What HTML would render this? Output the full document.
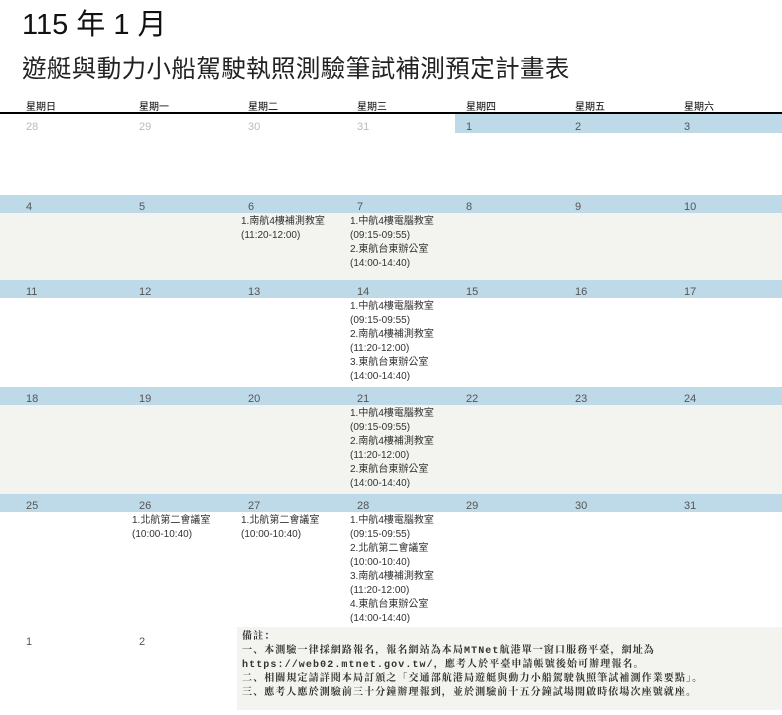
<!DOCTYPE html>
<html><head><meta charset="utf-8"><style>
body{margin:0;width:782px;height:715px;background:#fff;position:relative;overflow:hidden;font-family:"Liberation Sans","Noto Sans CJK TC",sans-serif;}
.a{position:absolute;}
.t1{left:22px;top:1px;font-size:29px;color:#111;white-space:nowrap}
.t2{left:22px;top:50px;font-size:24.5px;letter-spacing:0.4px;color:#222;white-space:nowrap}
.h{font-size:10px;color:#000;top:98px}
.line{left:0;top:112px;width:782px;height:2px;background:#000}
.blue{background:#bed9e7}
.grey{background:#f3f4ef}
.d{font-size:11px;color:#555}
.g{color:#bbb}
.ev{font-size:10px;color:#333;line-height:14px;white-space:nowrap}
.note{left:237px;top:627px;width:545px;height:83px;background:#f3f4ef;font-family:"Liberation Mono","Noto Serif CJK SC",serif;font-weight:bold;font-size:10px;letter-spacing:1.1px;color:#333;line-height:14px;padding:4px 0 0 5px;box-sizing:border-box;white-space:nowrap}
</style></head><body>
<div class="a t1">115 年 1 月</div>
<div class="a t2">遊艇與動力小船駕駛執照測驗筆試補測預定計畫表</div>
<div class="a h" style="left:26px">星期日</div>
<div class="a h" style="left:139px">星期一</div>
<div class="a h" style="left:248px">星期二</div>
<div class="a h" style="left:357px">星期三</div>
<div class="a h" style="left:466px">星期四</div>
<div class="a h" style="left:575px">星期五</div>
<div class="a h" style="left:684px">星期六</div>
<div class="a line"></div>

<div class="a blue" style="left:455px;top:114px;width:327px;height:19px"></div>
<div class="a blue" style="left:0;top:195px;width:782px;height:18px"></div>
<div class="a grey" style="left:0;top:213px;width:782px;height:67px"></div>
<div class="a blue" style="left:0;top:280px;width:782px;height:18px"></div>
<div class="a blue" style="left:0;top:387px;width:782px;height:18px"></div>
<div class="a grey" style="left:0;top:405px;width:782px;height:89px"></div>
<div class="a blue" style="left:0;top:494px;width:782px;height:18px"></div>

<div class="a d g" style="left:26px;top:121px">28</div>
<div class="a d g" style="left:139px;top:121px">29</div>
<div class="a d g" style="left:248px;top:121px">30</div>
<div class="a d g" style="left:357px;top:121px">31</div>
<div class="a d" style="left:466px;top:121px">1</div>
<div class="a d" style="left:575px;top:121px">2</div>
<div class="a d" style="left:684px;top:121px">3</div>

<div class="a d" style="left:26px;top:201px">4</div>
<div class="a d" style="left:139px;top:201px">5</div>
<div class="a d" style="left:248px;top:201px">6</div>
<div class="a d" style="left:357px;top:201px">7</div>
<div class="a d" style="left:466px;top:201px">8</div>
<div class="a d" style="left:575px;top:201px">9</div>
<div class="a d" style="left:684px;top:201px">10</div>
<div class="a ev" style="left:241px;top:215px">1.南航4樓補測教室<br>(11:20-12:00)</div>
<div class="a ev" style="left:350px;top:215px">1.中航4樓電腦教室<br>(09:15-09:55)<br>2.東航台東辦公室<br>(14:00-14:40)</div>

<div class="a d" style="left:26px;top:286px">11</div>
<div class="a d" style="left:139px;top:286px">12</div>
<div class="a d" style="left:248px;top:286px">13</div>
<div class="a d" style="left:357px;top:286px">14</div>
<div class="a d" style="left:466px;top:286px">15</div>
<div class="a d" style="left:575px;top:286px">16</div>
<div class="a d" style="left:684px;top:286px">17</div>
<div class="a ev" style="left:350px;top:300px">1.中航4樓電腦教室<br>(09:15-09:55)<br>2.南航4樓補測教室<br>(11:20-12:00)<br>3.東航台東辦公室<br>(14:00-14:40)</div>

<div class="a d" style="left:26px;top:393px">18</div>
<div class="a d" style="left:139px;top:393px">19</div>
<div class="a d" style="left:248px;top:393px">20</div>
<div class="a d" style="left:357px;top:393px">21</div>
<div class="a d" style="left:466px;top:393px">22</div>
<div class="a d" style="left:575px;top:393px">23</div>
<div class="a d" style="left:684px;top:393px">24</div>
<div class="a ev" style="left:350px;top:407px">1.中航4樓電腦教室<br>(09:15-09:55)<br>2.南航4樓補測教室<br>(11:20-12:00)<br>2.東航台東辦公室<br>(14:00-14:40)</div>

<div class="a d" style="left:26px;top:500px">25</div>
<div class="a d" style="left:139px;top:500px">26</div>
<div class="a d" style="left:248px;top:500px">27</div>
<div class="a d" style="left:357px;top:500px">28</div>
<div class="a d" style="left:466px;top:500px">29</div>
<div class="a d" style="left:575px;top:500px">30</div>
<div class="a d" style="left:684px;top:500px">31</div>
<div class="a ev" style="left:132px;top:514px">1.北航第二會議室<br>(10:00-10:40)</div>
<div class="a ev" style="left:241px;top:514px">1.北航第二會議室<br>(10:00-10:40)</div>
<div class="a ev" style="left:350px;top:514px">1.中航4樓電腦教室<br>(09:15-09:55)<br>2.北航第二會議室<br>(10:00-10:40)<br>3.南航4樓補測教室<br>(11:20-12:00)<br>4.東航台東辦公室<br>(14:00-14:40)</div>

<div class="a d" style="left:26px;top:636px">1</div>
<div class="a d" style="left:139px;top:636px">2</div>
<div class="a note">備註：<br>一、本測驗一律採網路報名，報名網站為本局MTNet航港單一窗口服務平臺，網址為<br>https://web02.mtnet.gov.tw/，應考人於平臺申請帳號後始可辦理報名。<br>二、相關規定請詳閱本局訂頒之「交通部航港局遊艇與動力小船駕駛執照筆試補測作業要點」。<br>三、應考人應於測驗前三十分鐘辦理報到，並於測驗前十五分鐘試場開啟時依場次座號就座。</div>
</body></html>
